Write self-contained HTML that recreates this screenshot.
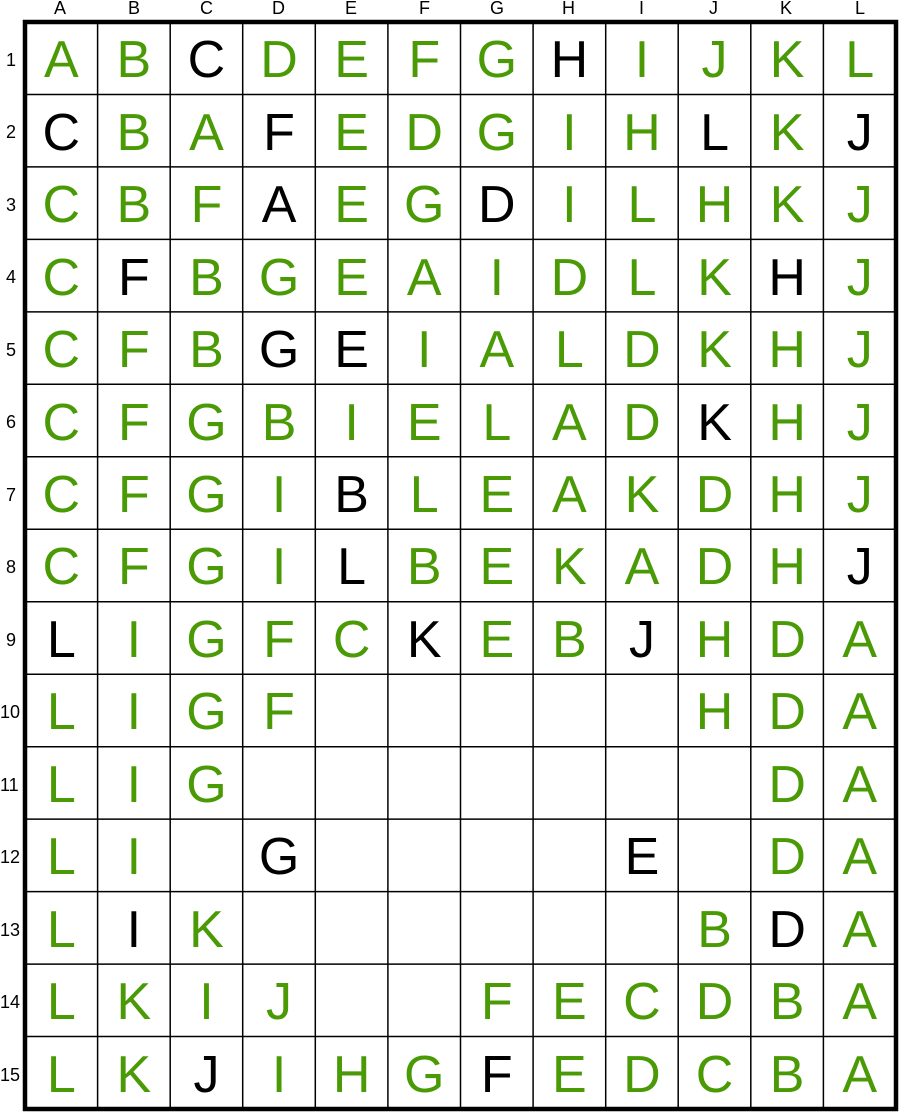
<!DOCTYPE html>
<html><head><meta charset="utf-8"><style>
body{margin:0;background:#fff;width:900px;height:1114px;overflow:hidden;position:relative;font-family:"Liberation Sans",sans-serif}
#g{position:absolute;left:25px;top:22px;width:871px;height:1087px;display:grid;grid-template-columns:repeat(12,1fr);grid-template-rows:repeat(15,1fr)}
#g div{display:flex;align-items:center;justify-content:center;font-size:52px;line-height:1;padding-top:4px;color:#4a9a05}
#g div.k{color:#000}
svg{position:absolute;left:0;top:0}
.c,.r{position:absolute;font-size:18px;color:#000}
</style></head><body>
<svg width="900" height="1114">
<g stroke="#000" stroke-width="1.5">
<line x1="97.6" y1="22" x2="97.6" y2="1109"/><line x1="170.2" y1="22" x2="170.2" y2="1109"/><line x1="242.7" y1="22" x2="242.7" y2="1109"/><line x1="315.3" y1="22" x2="315.3" y2="1109"/><line x1="387.9" y1="22" x2="387.9" y2="1109"/><line x1="460.5" y1="22" x2="460.5" y2="1109"/><line x1="533.1" y1="22" x2="533.1" y2="1109"/><line x1="605.7" y1="22" x2="605.7" y2="1109"/><line x1="678.2" y1="22" x2="678.2" y2="1109"/><line x1="750.8" y1="22" x2="750.8" y2="1109"/><line x1="823.4" y1="22" x2="823.4" y2="1109"/>
<line y1="94.5" x1="25" y2="94.5" x2="896"/><line y1="166.9" x1="25" y2="166.9" x2="896"/><line y1="239.4" x1="25" y2="239.4" x2="896"/><line y1="311.9" x1="25" y2="311.9" x2="896"/><line y1="384.3" x1="25" y2="384.3" x2="896"/><line y1="456.8" x1="25" y2="456.8" x2="896"/><line y1="529.3" x1="25" y2="529.3" x2="896"/><line y1="601.7" x1="25" y2="601.7" x2="896"/><line y1="674.2" x1="25" y2="674.2" x2="896"/><line y1="746.7" x1="25" y2="746.7" x2="896"/><line y1="819.1" x1="25" y2="819.1" x2="896"/><line y1="891.6" x1="25" y2="891.6" x2="896"/><line y1="964.1" x1="25" y2="964.1" x2="896"/><line y1="1036.5" x1="25" y2="1036.5" x2="896"/>
</g>
<rect x="25" y="22" width="871" height="1087" fill="none" stroke="#000" stroke-width="4.5"/>
</svg>
<div class="c" style="left:54px;top:-2px">A</div><div class="c" style="left:128px;top:-2px">B</div><div class="c" style="left:200px;top:-2px">C</div><div class="c" style="left:272px;top:-2px">D</div><div class="c" style="left:345px;top:-2px">E</div><div class="c" style="left:419px;top:-2px">F</div><div class="c" style="left:490px;top:-2px">G</div><div class="c" style="left:562px;top:-2px">H</div><div class="c" style="left:639px;top:-2px">I</div><div class="c" style="left:709px;top:-2px">J</div><div class="c" style="left:780px;top:-2px">K</div><div class="c" style="left:855px;top:-2px">L</div>
<div class="r" style="left:6px;top:50px">1</div><div class="r" style="left:6px;top:122px">2</div><div class="r" style="left:6px;top:195px">3</div><div class="r" style="left:6px;top:267px">4</div><div class="r" style="left:6px;top:340px">5</div><div class="r" style="left:6px;top:412px">6</div><div class="r" style="left:6px;top:485px">7</div><div class="r" style="left:6px;top:557px">8</div><div class="r" style="left:6px;top:630px">9</div><div class="r" style="left:0px;top:702px">10</div><div class="r" style="left:0px;top:775px">11</div><div class="r" style="left:0px;top:847px">12</div><div class="r" style="left:0px;top:920px">13</div><div class="r" style="left:0px;top:992px">14</div><div class="r" style="left:0px;top:1065px">15</div>
<div id="g">
<div>A</div><div>B</div><div class="k">C</div><div>D</div><div>E</div><div>F</div><div>G</div><div class="k">H</div><div>I</div><div>J</div><div>K</div><div>L</div>
<div class="k">C</div><div>B</div><div>A</div><div class="k">F</div><div>E</div><div>D</div><div>G</div><div>I</div><div>H</div><div class="k">L</div><div>K</div><div class="k">J</div>
<div>C</div><div>B</div><div>F</div><div class="k">A</div><div>E</div><div>G</div><div class="k">D</div><div>I</div><div>L</div><div>H</div><div>K</div><div>J</div>
<div>C</div><div class="k">F</div><div>B</div><div>G</div><div>E</div><div>A</div><div>I</div><div>D</div><div>L</div><div>K</div><div class="k">H</div><div>J</div>
<div>C</div><div>F</div><div>B</div><div class="k">G</div><div class="k">E</div><div>I</div><div>A</div><div>L</div><div>D</div><div>K</div><div>H</div><div>J</div>
<div>C</div><div>F</div><div>G</div><div>B</div><div>I</div><div>E</div><div>L</div><div>A</div><div>D</div><div class="k">K</div><div>H</div><div>J</div>
<div>C</div><div>F</div><div>G</div><div>I</div><div class="k">B</div><div>L</div><div>E</div><div>A</div><div>K</div><div>D</div><div>H</div><div>J</div>
<div>C</div><div>F</div><div>G</div><div>I</div><div class="k">L</div><div>B</div><div>E</div><div>K</div><div>A</div><div>D</div><div>H</div><div class="k">J</div>
<div class="k">L</div><div>I</div><div>G</div><div>F</div><div>C</div><div class="k">K</div><div>E</div><div>B</div><div class="k">J</div><div>H</div><div>D</div><div>A</div>
<div>L</div><div>I</div><div>G</div><div>F</div><div></div><div></div><div></div><div></div><div></div><div>H</div><div>D</div><div>A</div>
<div>L</div><div>I</div><div>G</div><div></div><div></div><div></div><div></div><div></div><div></div><div></div><div>D</div><div>A</div>
<div>L</div><div>I</div><div></div><div class="k">G</div><div></div><div></div><div></div><div></div><div class="k">E</div><div></div><div>D</div><div>A</div>
<div>L</div><div class="k">I</div><div>K</div><div></div><div></div><div></div><div></div><div></div><div></div><div>B</div><div class="k">D</div><div>A</div>
<div>L</div><div>K</div><div>I</div><div>J</div><div></div><div></div><div>F</div><div>E</div><div>C</div><div>D</div><div>B</div><div>A</div>
<div>L</div><div>K</div><div class="k">J</div><div>I</div><div>H</div><div>G</div><div class="k">F</div><div>E</div><div>D</div><div>C</div><div>B</div><div>A</div>
</div>
</body></html>
